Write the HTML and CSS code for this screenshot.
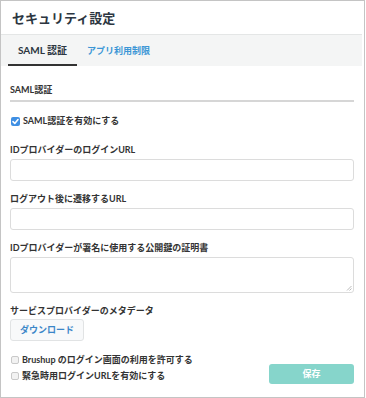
FILE: index.html
```html
<!DOCTYPE html>
<html lang="ja">
<head>
<meta charset="utf-8">
<link rel="stylesheet" href="styles.css">
</head>
<body>
<div class="frame">
  <div class="header">セキュリティ設定</div>
  <div class="tabs">
    <div class="tab active">SAML 認証</div>
    <div class="tab link">アプリ利用制限</div>
  </div>
  <div class="content">
    <div class="section-title">SAML認証</div>
    <div class="check-row first">
      <span class="box checked"><svg viewBox="0 0 9 9" width="9" height="9"><path d="M2 4.6 L3.8 6.4 L7 2.6" fill="none" stroke="#fff" stroke-width="1.6" stroke-linecap="round" stroke-linejoin="round"/></svg></span>
      <span class="check-label">SAML認証を有効にする</span>
    </div>
    <div class="label l1">IDプロバイダーのログインURL</div>
    <div class="input"></div>
    <div class="label">ログアウト後に遷移するURL</div>
    <div class="input"></div>
    <div class="label">IDプロバイダーが署名に使用する公開鍵の証明書</div>
    <div class="textarea"><svg class="grip" viewBox="0 0 6 6" width="6" height="6"><path d="M1 5.5 L5.5 1 M3.5 5.5 L5.5 3.5" stroke="#aaa" stroke-width="0.8"/></svg></div>
    <div class="label">サービスプロバイダーのメタデータ</div>
    <div class="btn-row"><div class="btn">ダウンロード</div></div>
    <div class="footer">
      <div class="checks">
        <div class="check-row">
          <span class="box"></span>
          <span class="check-label">Brushup のログイン画面の利用を許可する</span>
        </div>
        <div class="check-row">
          <span class="box"></span>
          <span class="check-label">緊急時用ログインURLを有効にする</span>
        </div>
      </div>
      <div class="save">保存</div>
    </div>
  </div>
</div>
</body>
</html>
```
FILE: styles.css
```css
* { box-sizing: border-box; margin: 0; padding: 0; }
body {
  margin: 0;
  background: #fff;
  font-family: "Lato", "Noto Sans CJK JP", sans-serif;
  color: #333;
}
.frame {
  width: 365px;
  height: 398px;
  border: 1px solid #c4c4c4;
  background: #fff;
  display: flex;
  flex-direction: column;
}
.header {
  height: 33px;
  line-height: 33px;
  padding-left: 11px;
  font-size: 13px;
  font-weight: bold;
  color: #2c3641;
  font-family: "Noto Sans CJK JP", sans-serif;
}
.tabs {
  margin-right: 2px;
  height: 32px;
  border-top: 1px solid #e4e6e6;
  background: #f4f5f5;
  display: flex;
  padding-left: 7px;
}
.tab {
  height: 31px;
  line-height: 31px;
  padding: 0 10px;
  font-weight: bold;
  font-family: "Noto Sans CJK JP", sans-serif;
}
.tab.active {
  font-size: 10px;
  color: #2c3641;
  border-bottom: 2px solid #333;
  font-family: "Lato", "Noto Sans CJK JP", sans-serif;
}
.tab.link {
  font-size: 9px;
  color: #3b96d6;
}
.content {
  padding: 18px 10px 0 9px;
  font-size: 9px;
  font-weight: bold;
}
.section-title {
  line-height: 12px;
  padding-bottom: 4px;
  border-bottom: 2px solid #d6d6d6;
  color: #333;
}
.check-row {
  display: flex;
  align-items: center;
  gap: 3px;
  height: 12px;
  line-height: 12px;
}
.check-row.first { margin-top: 13px; margin-left: 1px; }
.box {
  width: 8px;
  height: 8px;
  border: 1px solid #c9c9c9;
  background: #f2f2f2;
  border-radius: 2px;
  flex: none;
}
.box.checked {
  width: 9px;
  height: 9px;
  border: none;
  background: #3f8fe3;
  display: flex;
}
.label {
  line-height: 12px;
  margin-top: 12px;
  color: #333;
}
.label.l1 { margin-top: 17px; }
.input {
  margin-top: 3px;
  height: 22px;
  border: 1px solid #dcdcdc;
  border-radius: 3px;
  background: #fff;
}
.textarea {
  margin-top: 3px;
  height: 36px;
  border: 1px solid #dcdcdc;
  border-radius: 3px;
  background: #fff;
  position: relative;
}
.grip { position: absolute; right: 1px; bottom: 1px; }
.btn-row { display: flex; margin-top: 2px; }
.btn {
  height: 22px;
  line-height: 20px;
  padding: 0 9px;
  border: 1px solid #e1e3e4;
  border-radius: 3px;
  background: #f8f9fa;
  color: #3b86c8;
  font-family: "Noto Sans CJK JP", sans-serif;
  font-size: 9px;
}
.footer {
  margin-top: 13px;
  display: flex;
  justify-content: space-between;
  align-items: flex-end;
}
.checks {
  display: flex;
  flex-direction: column;
  gap: 4px;
  padding-bottom: 2px;
  padding-left: 1px;
}
.save {
  width: 85px;
  height: 20px;
  line-height: 20px;
  text-align: center;
  border-radius: 3px;
  background: #86d5cb;
  color: #fff;
  font-size: 9px;
  font-family: "Noto Sans CJK JP", sans-serif;
}
```
